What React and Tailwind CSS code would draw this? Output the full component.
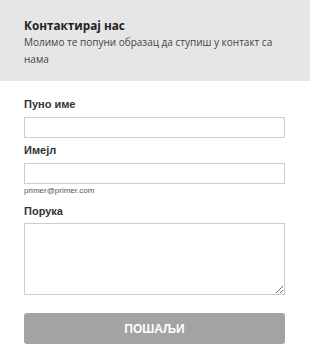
export default function App() {
  return (
    <div className="w-[310px] h-[357px] bg-white">
      <div className="bg-[#e6e6e6] h-[81px] px-6 pt-[17px] font-['Open_Sans',sans-serif]">
        <div className="text-[11.75px] font-bold text-[#222] leading-[16px]">Контактирај нас</div>
        <div className="text-[10px] text-[#444] leading-[17px] mt-[1px]">Молимо те попуни образац да ступиш у контакт са нама</div>
      </div>
      <div className="px-6 pt-[16px] font-['Liberation_Sans',Arial,sans-serif]">
        <label className="block text-[11px] font-bold text-[#333] leading-[14px]">Пуно име</label>
        <input className="block mt-[6px] w-[261px] h-[21px] border border-[#ccc] bg-white outline-none" />
        <label className="block mt-[5px] text-[11px] font-bold text-[#333] leading-[14px]">Имејл</label>
        <input className="block mt-[6px] w-[261px] h-[21px] border border-[#ccc] bg-white outline-none" />
        <div className="text-[8px] text-[#555] leading-[10px] mt-[2px]">primer@primer.com</div>
        <label className="block mt-[8px] text-[11px] font-bold text-[#333] leading-[14px]">Порука</label>
        <textarea className="block mt-[5px] w-[261px] h-[72px] border border-[#ccc] bg-white outline-none" />
        <button className="block mt-[18px] w-[261px] h-[31px] rounded-[3px] bg-[#a3a3a3] text-white text-[12px] font-bold">ПОШАЉИ</button>
      </div>
    </div>
  );
}
